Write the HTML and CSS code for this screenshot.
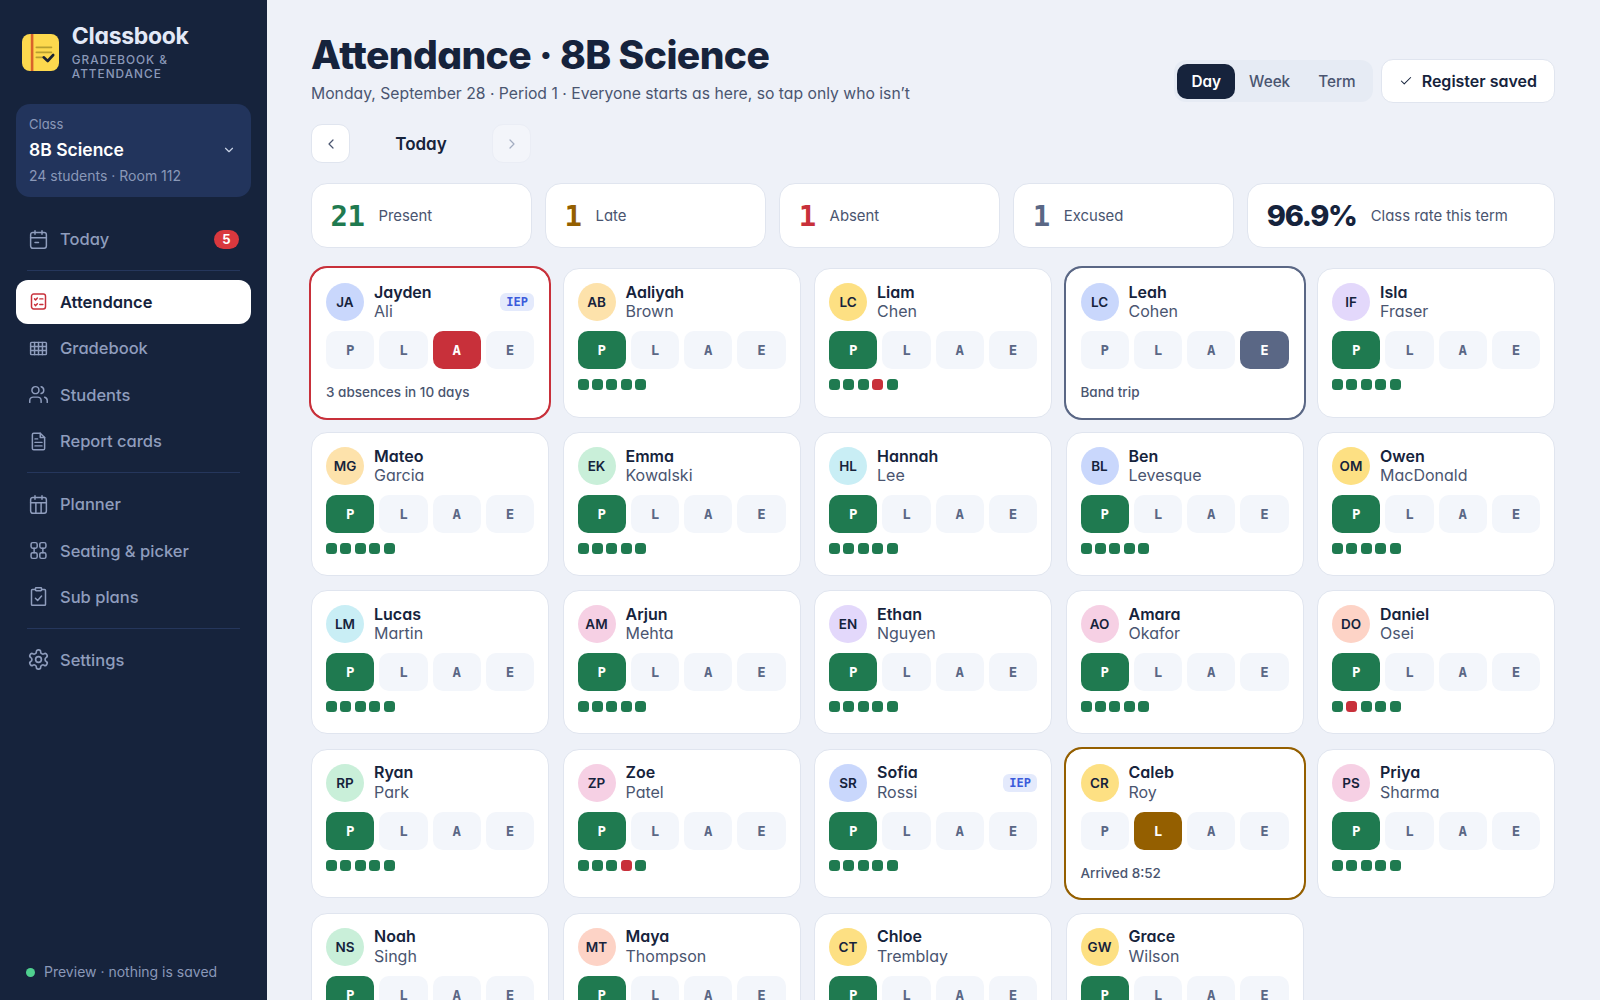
FILE: index.html
```html
<!DOCTYPE html>
<html lang="en">
<head>
<meta charset="utf-8">
<title>Attendance · 8B Science</title>
<link rel="stylesheet" href="styles.css">
</head>
<body>
<div class="app">
  <aside class="sidebar">
    <div class="brand">
      <svg class="logo" viewBox="0 0 37 37"><rect width="37" height="37" rx="8" fill="#fdd94e"/><rect x="8.800" width="2.600" height="37" fill="#d9622b"/><path d="M14.400 13.300h15M14.400 18.300h15M14.400 23.300h6" stroke="#b89f30" stroke-width="1.800" fill="none" stroke-linecap="round"/><path d="M21.700 23.300l4 3.700 5.500-6" stroke="#1a2234" stroke-width="2.600" fill="none" stroke-linecap="round" stroke-linejoin="round"/></svg>
      <div class="brand-text">
        <div class="brand-name">Classbook</div>
        <div class="brand-sub">Gradebook &amp; Attendance</div>
      </div>
    </div>
    <div class="class-card">
      <div class="class-label">Class</div>
      <div class="class-row"><span class="class-name">8B Science</span>
        <svg class="chev" viewBox="0 0 24 24"><path d="M6 9l6 6 6-6"/></svg></div>
      <div class="class-meta">24 students · Room 112</div>
    </div>
    <nav class="nav">
      <a class="nav-item"><svg class="ico" viewBox="0 0 24 24"><rect x="3" y="4" width="18" height="18" rx="2.500"/><path d="M16 2v4M8 2v4M3 10h18M8 15.500h4"/></svg><span>Today</span><b class="badge">5</b></a>
      <div class="nav-sep"></div>
      <a class="nav-item active"><svg class="ico" viewBox="0 0 24 24"><rect x="4" y="3.500" width="16" height="17" rx="2.500"/><path d="M7.500 9l1.200 1.200L10.700 8M13.500 9H17M7.500 15.500l1.200 1.200 2-2.200M13.500 15.500H17"/></svg><span>Attendance</span></a>
      <a class="nav-item"><svg class="ico" viewBox="0 0 24 24"><rect x="3" y="5" width="18" height="14" rx="1"/><path d="M3 9.700h18M3 14.300h18M7.500 5v14M12 5v14M16.500 5v14"/></svg><span>Gradebook</span></a>
      <a class="nav-item"><svg class="ico" viewBox="0 0 24 24"><path d="M15 21v-2a4 4 0 0 0-4-4H6a4 4 0 0 0-4 4v2"/><circle cx="8.500" cy="7" r="4"/><path d="M22 21v-2a4 4 0 0 0-3-3.870M15 3.130a4 4 0 0 1 0 7.750"/></svg><span>Students</span></a>
      <a class="nav-item"><svg class="ico" viewBox="0 0 24 24"><path d="M14 2.500H6.500a1.500 1.500 0 0 0-1.500 1.500v16a1.500 1.500 0 0 0 1.500 1.500h11a1.500 1.500 0 0 0 1.500-1.500V7.500z"/><path d="M14 2.500v5h5M16 13H8M16 17H8M11 9H8"/></svg><span>Report cards</span></a>
      <div class="nav-sep"></div>
      <a class="nav-item"><svg class="ico" viewBox="0 0 24 24"><rect x="3" y="4" width="18" height="18" rx="2.500"/><path d="M16 2v4M8 2v4M3 10h18M9 10v12M15 10v12"/></svg><span>Planner</span></a>
      <a class="nav-item"><svg class="ico" viewBox="0 0 24 24"><rect x="3.500" y="3" width="7" height="6.500" rx="2"/><rect x="13.500" y="3" width="7" height="6.500" rx="2"/><rect x="3.500" y="14.500" width="7" height="6.500" rx="2"/><rect x="13.500" y="14.500" width="7" height="6.500" rx="2"/><path d="M7 9.500v5M17 9.500v5"/></svg><span>Seating &amp; picker</span></a>
      <a class="nav-item"><svg class="ico" viewBox="0 0 24 24"><rect x="8.500" y="2" width="7" height="3.500" rx=".8"/><path d="M15.500 4H19a1 1 0 0 1 1 1v16a1 1 0 0 1-1 1H5a1 1 0 0 1-1-1V5a1 1 0 0 1 1-1h3.500"/><path d="M8.500 14l2.500 2.500 4.500-5"/></svg><span>Sub plans</span></a>
      <div class="nav-sep"></div>
      <a class="nav-item"><svg class="ico gear" viewBox="0 0 24 24"><path d="M12.220 2h-.44a2 2 0 0 0-2 2v.18a2 2 0 0 1-1 1.730l-.43.25a2 2 0 0 1-2 0l-.15-.08a2 2 0 0 0-2.730.73l-.22.38a2 2 0 0 0 .73 2.730l.15.1a2 2 0 0 1 1 1.720v.51a2 2 0 0 1-1 1.740l-.15.09a2 2 0 0 0-.73 2.730l.22.38a2 2 0 0 0 2.730.73l.15-.08a2 2 0 0 1 2 0l.43.25a2 2 0 0 1 1 1.730V20a2 2 0 0 0 2 2h.44a2 2 0 0 0 2-2v-.18a2 2 0 0 1 1-1.730l.43-.25a2 2 0 0 1 2 0l.15.08a2 2 0 0 0 2.730-.73l.22-.39a2 2 0 0 0-.73-2.730l-.15-.08a2 2 0 0 1-1-1.740v-.5a2 2 0 0 1 1-1.740l.15-.09a2 2 0 0 0 .73-2.730l-.22-.38a2 2 0 0 0-2.730-.73l-.15.08a2 2 0 0 1-2 0l-.43-.25a2 2 0 0 1-1-1.730V4a2 2 0 0 0-2-2z"/><circle cx="12" cy="12" r="3"/></svg><span>Settings</span></a>
    </nav>
    <div class="side-foot"><i class="foot-dot"></i>Preview · nothing is saved</div>
  </aside>
  <main class="main">
    <header class="top">
      <div>
        <h1 class="title">Attendance · 8B Science</h1>
        <p class="subtitle">Monday, September 28 · Period 1 · Everyone starts as here, so tap only who isn’t</p>
      </div>
      <div class="top-actions">
        <div class="tabs"><span class="tab on">Day</span><span class="tab">Week</span><span class="tab">Term</span></div>
        <button class="saved"><svg class="saved-ico" viewBox="0 0 24 24"><path d="M20 6L9 17l-5-5"/></svg>Register saved</button>
      </div>
    </header>
    <div class="daynav">
      <button class="step"><svg viewBox="0 0 24 24"><path d="M15 18l-6-6 6-6"/></svg></button>
      <span class="day-label">Today</span>
      <button class="step off"><svg viewBox="0 0 24 24"><path d="M9 18l6-6-6-6"/></svg></button>
    </div>
    <section class="stats">
      <div class="stat"><b class="num green">21</b><span>Present</span></div>
      <div class="stat"><b class="num amber">1</b><span>Late</span></div>
      <div class="stat"><b class="num red">1</b><span>Absent</span></div>
      <div class="stat"><b class="num slate">1</b><span>Excused</span></div>
      <div class="stat"><b class="rate">96.9%</b><span>Class rate this term</span></div>
    </section>
    <section class="grid" id="grid"></section>
  </main>
</div>
<script src="app.js"></script>
</body>
</html>
```
FILE: app.js
```js
const S = [
 ["JA","Jayden","Ali","blue","A",null,"3 absences in 10 days",1],
 ["AB","Aaliyah","Brown","peach","P",-1],
 ["LC","Liam","Chen","yellow","P",3],
 ["LC","Leah","Cohen","blue","E",null,"Band trip"],
 ["IF","Isla","Fraser","purple","P",-1],
 ["MG","Mateo","Garcia","peach","P",-1],
 ["EK","Emma","Kowalski","mint","P",-1],
 ["HL","Hannah","Lee","cyan","P",-1],
 ["BL","Ben","Levesque","blue","P",-1],
 ["OM","Owen","MacDonald","yellow","P",-1],
 ["LM","Lucas","Martin","cyan","P",-1],
 ["AM","Arjun","Mehta","pink","P",-1],
 ["EN","Ethan","Nguyen","purple","P",-1],
 ["AO","Amara","Okafor","pink","P",-1],
 ["DO","Daniel","Osei","salmon","P",1],
 ["RP","Ryan","Park","mint","P",-1],
 ["ZP","Zoe","Patel","pink","P",3],
 ["SR","Sofia","Rossi","blue","P",-1,null,1],
 ["CR","Caleb","Roy","yellow","L",null,"Arrived 8:52"],
 ["PS","Priya","Sharma","pink","P",-1],
 ["NS","Noah","Singh","mint","P",-1],
 ["MT","Maya","Thompson","salmon","P",-1],
 ["CT","Chloe","Tremblay","yellow","P",-1],
 ["GW","Grace","Wilson","yellow","P",-1]
];
document.getElementById("grid").innerHTML = S.map(([ini,fn,ln,col,st,red,note,iep]) => {
  const btns = ["P","L","A","E"].map(k => `<span class="mark${k===st?" on-"+k:""}">${k}</span>`).join("");
  const foot = note
    ? `<div class="note">${note}</div>`
    : `<div class="dots">${[0,1,2,3,4].map(i=>`<i class="dot${i===red?" miss":""}"></i>`).join("")}</div>`;
  return `<article class="card${st!=="P"?" flag-"+st:""}">
    <div class="who"><span class="ava ${col}">${ini}</span>
      <div class="names"><div class="fn">${fn}</div><div class="ln">${ln}</div></div>
      ${iep?'<span class="iep">IEP</span>':""}</div>
    <div class="marks">${btns}</div>${foot}</article>`;
}).join("");
```
FILE: styles.css
```css
* { box-sizing: border-box; }
html, body { margin: 0; height: 100%; overflow: hidden; }
body { font-family: "Inter", "Noto Sans", sans-serif; font-feature-settings: "cv11"; color: #16233c; background: #eef1f8; }
.app { display: flex; height: 1000px; overflow: hidden; }

.sidebar { width: 267px; flex: none; background: #16233c; padding: 25px 16px 0; display: flex; flex-direction: column; position: relative; }
.brand { display: flex; align-items: center; gap: 12.500px; padding: 0 0 0 6.300px; height: 55px; }
.logo { width: 37px; height: 37px; flex: none; }
.brand-name { font-size: 23px; font-weight: 700; color: #e3e9f7; line-height: 25px; letter-spacing: -.3px; }
.brand-sub { font-size: 11.800px; font-weight: 500; color: #8a98b8; text-transform: uppercase; letter-spacing: .085em; line-height: 13.500px; margin-top: 5px; }
.class-card { margin-top: 24px; background: #22345c; border-radius: 14px; padding: 12px 13px; height: 93px; }
.class-label { font-size: 13px; line-height: 17px; color: #8a98b8; }
.class-row { display: flex; align-items: center; justify-content: space-between; margin-top: 5px; }
.class-name { font-size: 17.500px; font-weight: 600; color: #fff; line-height: 24px; }
.chev { width: 14px; height: 14px; fill: none; stroke: #c9d2e6; stroke-width: 2; stroke-linecap: round; stroke-linejoin: round; margin-right: 2px; }
.class-meta { font-size: 14px; color: #8a98b8; line-height: 20px; margin-top: 4px; }
.nav { margin-top: 20px; display: flex; flex-direction: column; gap: 2.400px; }
.nav-item { height: 44px; flex: none; display: flex; align-items: center; gap: 11px; padding: 0 12px; border-radius: 12px; font-size: 16.500px; font-weight: 500; color: #8f9dbd; }
.nav-item.active { background: #fff; color: #16233c; font-weight: 600; }
.ico { width: 21px; height: 21px; flex: none; fill: none; stroke: #8f9dbd; stroke-width: 1.700; stroke-linecap: round; stroke-linejoin: round; }
.ico.gear { transform: scale(1.100); }
.active .ico { stroke: #c8303a; }
.badge { margin-left: auto; min-width: 25px; height: 19px; border-radius: 10px; background: #d9383e; color: #fff; font-size: 13px; font-weight: 700; text-align: center; line-height: 19px; }
.nav-sep { height: 1px; background: #25365c; margin: 6.600px 11px; flex: none; }
.side-foot { position: absolute; left: 26px; top: 960px; display: flex; align-items: center; gap: 9px; font-size: 14px; line-height: 24px; color: #8a98b8; }
.foot-dot { width: 9px; height: 9px; border-radius: 50%; background: #4fd08f; }

.main { flex: 1; min-width: 0; padding: 30px 45px 0 44px; }
.top { display: flex; justify-content: space-between; align-items: flex-start; }
.title { margin: 0; font-size: 39px; line-height: 50px; font-weight: 800; letter-spacing: -.6px; color: #16233c; }
.subtitle { margin: 2px 0 0; font-size: 15.720px; line-height: 24px; color: #4a5570; }
.top-actions { display: flex; align-items: center; gap: 7.500px; margin-top: 29px; }
.tabs { display: flex; background: #e6ebf4; border-radius: 12px; padding: 3.500px; height: 42px; }
.tab { display: flex; align-items: center; padding: 0 14px; font-size: 15.300px; font-weight: 500; color: #4a5570; border-radius: 10px; }
.tab.on { background: #16233c; color: #fff; font-weight: 600; }
.saved { height: 44px; display: flex; align-items: center; gap: 9px; padding: 0 17px; background: #fff; border: 1px solid #e0e5ef; border-radius: 12px; font: 600 16px "Inter", sans-serif; font-feature-settings: "cv11"; color: #16233c; }
.saved-ico { width: 14px; height: 14px; fill: none; stroke: #16233c; stroke-width: 1.800; stroke-linecap: round; stroke-linejoin: round; }

.daynav { display: flex; align-items: center; margin-top: 18px; }
.step { width: 39px; height: 39px; padding: 0; display: flex; align-items: center; justify-content: center; background: #fff; border: 1px solid #e0e5ef; border-radius: 11px; }
.step svg { width: 16px; height: 16px; fill: none; stroke: #4a5570; stroke-width: 1.800; stroke-linecap: round; stroke-linejoin: round; }
.step.off { background: #f3f5fa; border-color: #eaedf5; }
.step.off svg { stroke: #a2acc0; }
.day-label { width: 142px; text-align: center; font-size: 17px; font-weight: 600; }

.stats { display: grid; grid-template-columns: repeat(4, 1fr) 1.395fr; gap: 13.500px; margin-top: 20px; }
.stat { height: 65px; display: flex; align-items: center; gap: 14px; padding: 0 18.500px; background: #fff; border: 1px solid #e0e5ef; border-radius: 16px; font-size: 14.900px; color: #4a5570; }
.num { font-family: "DejaVu Sans Mono", monospace; font-size: 29px; font-weight: 700; letter-spacing: -.5px; }
.rate { font-size: 29px; font-weight: 800; color: #16233c; letter-spacing: -1.300px; }
.green { color: #1f7a50; } .amber { color: #945f00; } .red { color: #c8303a; } .slate { color: #5a6785; }

.grid { display: grid; grid-template-columns: repeat(5, 1fr); column-gap: 13.500px; row-gap: 14.400px; margin-top: 20px; align-items: stretch; }
.card { background: #fff; border: 1px solid #e0e5ef; border-radius: 16px; padding: 14px; min-width: 0; }
.flag-A { box-shadow: 0 0 0 2px #c8303a; border-color: #fff; }
.flag-E { box-shadow: 0 0 0 2px #5a6785; border-color: #fff; }
.flag-L { box-shadow: 0 0 0 2px #945f00; border-color: #fff; }
.who { display: flex; align-items: center; gap: 10px; height: 38px; }
.ava { width: 38px; height: 38px; flex: none; border-radius: 50%; display: flex; align-items: center; justify-content: center; font-size: 13.500px; font-weight: 600; color: #16233c; }
.blue { background: #c9d7fc; } .peach { background: #fde2ab; } .yellow { background: #fde083; } .purple { background: #e3d8fb; }
.mint { background: #c9efd9; } .cyan { background: #c9eef5; } .pink { background: #f6d0e4; } .salmon { background: #fdd3c6; }
.names { flex: 1; min-width: 0; }
.fn { font-size: 16px; font-weight: 600; line-height: 19.500px; }
.ln { font-size: 16px; line-height: 19.500px; color: #4a5570; }
.iep { flex: none; height: 18px; padding: 0 6px; border-radius: 6px; background: #e4eafc; color: #3b5bdb; font: 700 12px/18px "DejaVu Sans Mono", monospace; }
.marks { display: grid; grid-template-columns: repeat(4, 1fr); gap: 5px; margin-top: 10px; }
.mark { height: 38px; border-radius: 10px; background: #f3f6fb; color: #5a6785; display: flex; align-items: center; justify-content: center; font: 700 14px "DejaVu Sans Mono", monospace; }
.on-P { background: #1f7a50; color: #fff; } .on-L { background: #945f00; color: #fff; } .on-A { background: #c8303a; color: #fff; } .on-E { background: #5a6785; color: #fff; }
.dots { display: flex; gap: 3.400px; margin-top: 10px; height: 17.800px; }
.dot { width: 11px; height: 11px; border-radius: 3.500px; background: #1f7a50; }
.dot.miss { background: #c8303a; }
.note { margin-top: 14px; font-size: 13.500px; font-weight: 500; line-height: 19.800px; color: #4a5570; }
```
